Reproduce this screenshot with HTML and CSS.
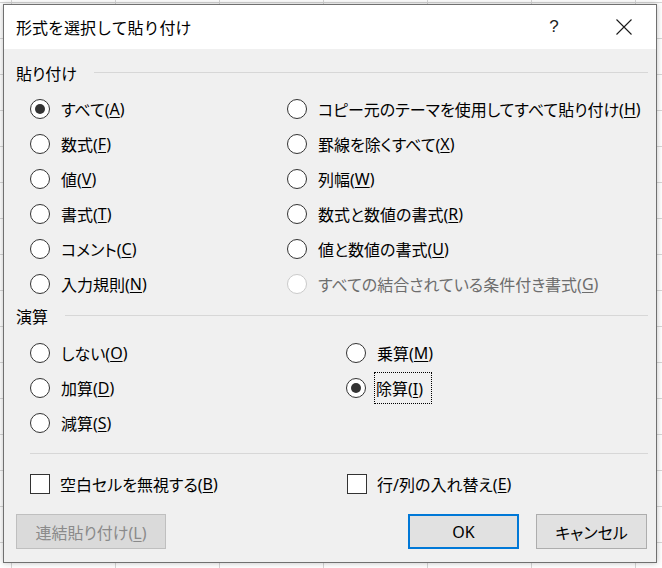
FILE: index.html
```html
<!DOCTYPE html>
<html>
<head>
	<title>形式を選択して貼り付け</title>
	<link rel="stylesheet" href="styles.css">
</head>
<body>
	<div class="dialog">
		<div class="titlebar">
			<span class="title">形式を選択して貼り付け</span>
			<span class="help">?</span>
			<span class="close">
				<svg width="16" height="16" viewBox="0 0 16 16"><path d="M0.5 0.5 L15.5 15.5 M15.5 0.5 L0.5 15.5" stroke="#1a1a1a" stroke-width="1.1" fill="none"/></svg>
			</span>
		</div>
		<div class="content">
			<div class="group-head first"><span>貼り付け</span><div class="line"></div></div>
			<div class="grid paste">
				<div class="opt"><span class="radio checked"></span>すべて(<u>A</u>)</div>
				<div class="opt"><span class="radio"></span>コピー元のテーマを使用してすべて貼り付け(<u>H</u>)</div>
				<div class="opt"><span class="radio"></span>数式(<u>F</u>)</div>
				<div class="opt"><span class="radio"></span>罫線を除くすべて(<u>X</u>)</div>
				<div class="opt"><span class="radio"></span>値(<u>V</u>)</div>
				<div class="opt"><span class="radio"></span>列幅(<u>W</u>)</div>
				<div class="opt"><span class="radio"></span>書式(<u>T</u>)</div>
				<div class="opt"><span class="radio"></span>数式と数値の書式(<u>R</u>)</div>
				<div class="opt"><span class="radio"></span>コメント(<u>C</u>)</div>
				<div class="opt"><span class="radio"></span>値と数値の書式(<u>U</u>)</div>
				<div class="opt"><span class="radio"></span>入力規則(<u>N</u>)</div>
				<div class="opt disabled"><span class="radio"></span>すべての結合されている条件付き書式(<u>G</u>)</div>
			</div>
			<div class="group-head"><span>演算</span><div class="line"></div></div>
			<div class="grid ops">
				<div class="opt"><span class="radio"></span>しない(<u>O</u>)</div>
				<div class="opt"><span class="radio"></span>乗算(<u>M</u>)</div>
				<div class="opt"><span class="radio"></span>加算(<u>D</u>)</div>
				<div class="opt"><span class="radio checked"></span><span class="focus">除算(<u>I</u>)</span></div>
				<div class="opt"><span class="radio"></span>減算(<u>S</u>)</div>
			</div>
			<div class="rule"></div>
			<div class="grid checks">
				<div class="opt"><span class="box"></span>空白セルを無視する(<u>B</u>)</div>
				<div class="opt"><span class="box"></span>行/列の入れ替え(<u>E</u>)</div>
			</div>
			<div class="buttons">
				<button type="button" class="btn link" disabled>連結貼り付け(<u>L</u>)</button>
				<button type="button" class="btn ok">OK</button>
				<button type="button" class="btn cancel">キャンセル</button>
			</div>
		</div>
	</div>
</body>
</html>
```

FILE: styles.css
```css
body{
	margin: 0;
	width: 662px;
	height: 568px;
	overflow: hidden;
	background-color: #fff;
	background-image: linear-gradient(to right, #d6d6d6 1px, transparent 1px), linear-gradient(to bottom, #d6d6d6 1px, transparent 1px);
	background-size: 104px 100%, 100% 36px;
	background-position: 11px 0, 0 2px;
	font-family: "Noto Sans CJK JP", "Noto Sans", sans-serif;
	color: #000;
}
.dialog{
	box-sizing: border-box;
	margin: 4px 0 0 3px;
	width: 654px;
	height: 559px;
	border: 1px solid #707070;
	background: #f0f0f0;
	box-shadow: 0 0 6px rgba(0,0,0,0.25);
	display: flex;
	flex-direction: column;
}
.titlebar{
	height: 44px;
	background: #fff;
	display: flex;
	align-items: center;
	padding: 0 9px 0 12px;
}
.title{
	font-size: 16px;
	flex: 1;
}
.help{
	width: 46px;
	text-align: center;
	font-family: "Liberation Sans", sans-serif;
	font-size: 17px;
	color: #222;
	margin-right: 24px;
}
.close{
	width: 46px;
	display: flex;
	justify-content: center;
}
.content{
	padding: 0 8px 0 12px;
	font-family: "Noto Sans", "Noto Sans CJK JP", sans-serif;
	font-size: 16px;
	font-feature-settings: "palt";
}
.group-head{
	display: flex;
	align-items: center;
	height: 20px;
	margin-top: 5px;
}
.group-head.first{
	margin-top: 14px;
}
.group-head .line{
	flex: 1;
	height: 1px;
	background: #d7d7d7;
	margin-left: 17px;
	margin-top: -1px;
}
.grid{
	display: grid;
	grid-auto-rows: 35px;
	margin-left: 14px;
}
.paste{
	grid-template-columns: 257px 1fr;
	margin-top: 8px;
}
.ops{
	grid-template-columns: 316px 1fr;
	margin-top: 9px;
}
.checks{
	grid-template-columns: 317px 1fr;
	margin-top: 12px;
}
.opt{
	display: flex;
	align-items: center;
	white-space: nowrap;
}
.radio{
	box-sizing: border-box;
	width: 20px;
	height: 20px;
	border: 1px solid #333;
	border-radius: 50%;
	background: #fff;
	margin-right: 11px;
	display: flex;
	align-items: center;
	justify-content: center;
	flex: none;
}
.radio.checked::after{
	content: "";
	width: 10px;
	height: 10px;
	border-radius: 50%;
	background: #333;
}
.disabled{
	color: #6d6d6d;
}
.disabled .radio{
	border-color: #cacaca;
}
.box{
	box-sizing: border-box;
	width: 20px;
	height: 20px;
	border: 1px solid #333;
	background: #fff;
	margin-right: 10px;
	flex: none;
}
.focus{
	outline: 1px dotted #000;
	padding: 3px 8px 3px 1px;
	margin-left: -2px;
}
u{
	text-underline-offset: 2px;
}
.rule{
	height: 1px;
	background: #d7d7d7;
	margin: 13px 0 0 14px;
}
.buttons{
	display: flex;
	margin-top: 13px;
	padding-right: 1px;
}
.btn{
	box-sizing: border-box;
	height: 35px;
	font-family: "Noto Sans", "Noto Sans CJK JP", sans-serif;
	font-size: 16px;
	font-feature-settings: "palt";
	color: #000;
	background: #e1e1e1;
	border: 1px solid #adadad;
	padding: 0;
}
.link{
	width: 150px;
	background: #dadada;
	border-color: #bfbfbf;
	color: #8a8a8a;
	margin-right: auto;
}
.ok{
	width: 111px;
	border: 2px solid #0078d7;
	margin-right: 17px;
}
.cancel{
	width: 111px;
}
```
